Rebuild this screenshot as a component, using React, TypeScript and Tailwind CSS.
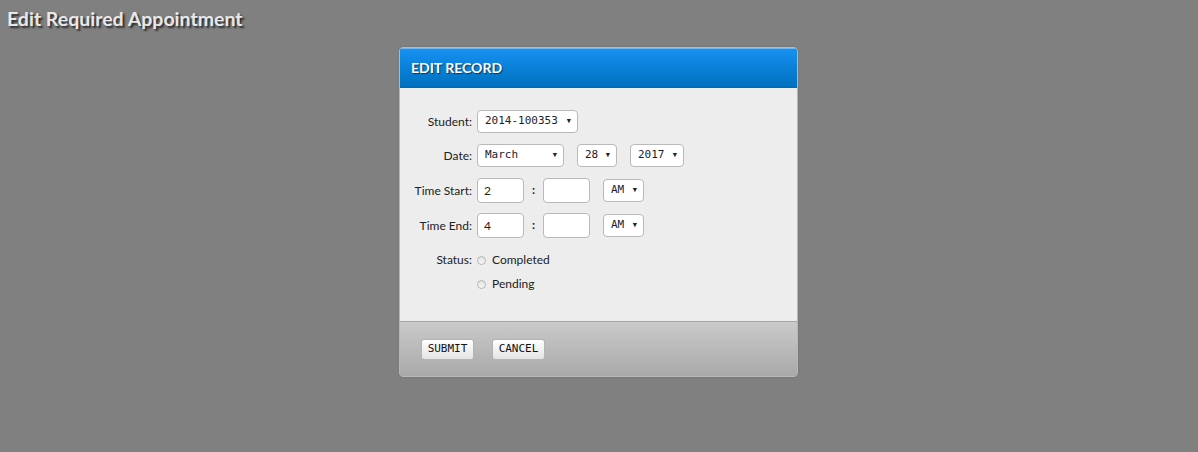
import React from "react";

const mono = { fontFamily: '"DejaVu Sans Mono", "Liberation Mono", monospace' };

function FakeSelect({ value, width }: { value: string; width: string }) {
  return (
    <div
      className={`flex h-[23px] items-center justify-between rounded-[4px] border border-[#b9b9b9] bg-white pl-[7px] pr-[6px] text-[11px] text-[#1c1c2e] ${width}`}
      style={mono}
    >
      <span>{value}</span>
      <span className="text-[7px] leading-none text-[#222]">▼</span>
    </div>
  );
}

function TextBox({ value }: { value: string }) {
  return (
    <div className="flex h-[25px] w-[47px] items-center rounded-[4px] border border-[#b9b9b9] bg-white pl-[6px] text-[12px] text-[#222]">
      {value}
    </div>
  );
}

function Radio({ label }: { label: string }) {
  return (
    <div className="flex h-[24px] items-center">
      <span className="h-[9px] w-[9px] rounded-full border border-[#b4b4b4] bg-[linear-gradient(180deg,#e2e2e2,#f8f8f8)]"></span>
      <span className="ml-[6px] text-[12px] text-[#222]">{label}</span>
    </div>
  );
}

export default function App() {
  return (
    <div
      className="min-h-[452px] w-full bg-[#808080]"
      style={{ fontFamily: 'Lato, "Open Sans", "Liberation Sans", sans-serif' }}
    >
      <h1 className="pl-[7px] pt-[6px] text-[19.5px] font-bold leading-[26px] text-[#e8e8e8] [text-shadow:2px_2px_2px_#2a2a2a]">
        Edit Required Appointment
      </h1>

      <div className="mt-[15px] flex justify-center pr-[1px]">
        <div className="w-[399px] overflow-hidden rounded-[4px] border border-[#b8b8b8] shadow-[0_0_2px_rgba(0,0,0,0.15)]">
          {/* header */}
          <div className="flex h-[40px] items-center border-b border-[#0a68a8] bg-[linear-gradient(180deg,#1892f4_0%,#0a80d8_50%,#0071be_100%)] pl-[11px] shadow-[inset_0_1px_0_#6cb8f4]">
            <span className="text-[14px] font-bold text-white [text-shadow:1px_1px_1px_#0a3a60]">
              EDIT RECORD
            </span>
          </div>

          {/* body */}
          <div className="bg-[#ededed] pb-[25px] pt-[21px] text-[12px] text-[#222]">
            <div className="flex h-[25px] items-center">
              <div className="w-[72px] text-right">Student:</div>
              <div className="ml-[5px]">
                <FakeSelect value="2014-100353" width="w-[101px]" />
              </div>
            </div>

            <div className="mt-[9px] flex h-[25px] items-center">
              <div className="w-[72px] text-right">Date:</div>
              <div className="ml-[5px] flex gap-[13px]">
                <FakeSelect value="March" width="w-[87px]" />
                <FakeSelect value="28" width="w-[40px]" />
                <FakeSelect value="2017" width="w-[54px]" />
              </div>
            </div>

            <div className="mt-[10px] flex h-[25px] items-center">
              <div className="w-[72px] text-right">Time Start:</div>
              <div className="ml-[5px] flex items-center">
                <TextBox value="2" />
                <span className="w-[19px] pb-[2px] text-center text-[12px] font-bold">:</span>
                <TextBox value="" />
                <div className="ml-[13px]">
                  <FakeSelect value="AM" width="w-[41px]" />
                </div>
              </div>
            </div>

            <div className="mt-[10px] flex h-[25px] items-center">
              <div className="w-[72px] text-right">Time End:</div>
              <div className="ml-[5px] flex items-center">
                <TextBox value="4" />
                <span className="w-[19px] pb-[2px] text-center text-[12px] font-bold">:</span>
                <TextBox value="" />
                <div className="ml-[13px]">
                  <FakeSelect value="AM" width="w-[41px]" />
                </div>
              </div>
            </div>

            <div className="mt-[10px] flex">
              <div className="flex h-[24px] w-[72px] items-center justify-end">Status:</div>
              <div className="ml-[5px] flex flex-col">
                <Radio label="Completed" />
                <Radio label="Pending" />
              </div>
            </div>
          </div>

          {/* footer */}
          <div className="flex h-[55px] gap-[18px] border-t border-[#a6a6a6] bg-[linear-gradient(180deg,#cacaca_0%,#a9a9a9_100%)] pl-[21px] pt-[17px]">
            <button
              className="h-[21px] w-[53px] rounded-[3px] border border-[#b4b4b4] bg-[linear-gradient(180deg,#ffffff,#e4e4e4)] text-[11px] text-[#111]"
              style={mono}
            >
              SUBMIT
            </button>
            <button
              className="h-[21px] w-[53px] rounded-[3px] border border-[#b4b4b4] bg-[linear-gradient(180deg,#ffffff,#e4e4e4)] text-[11px] text-[#111]"
              style={mono}
            >
              CANCEL
            </button>
          </div>
        </div>
      </div>
    </div>
  );
}
